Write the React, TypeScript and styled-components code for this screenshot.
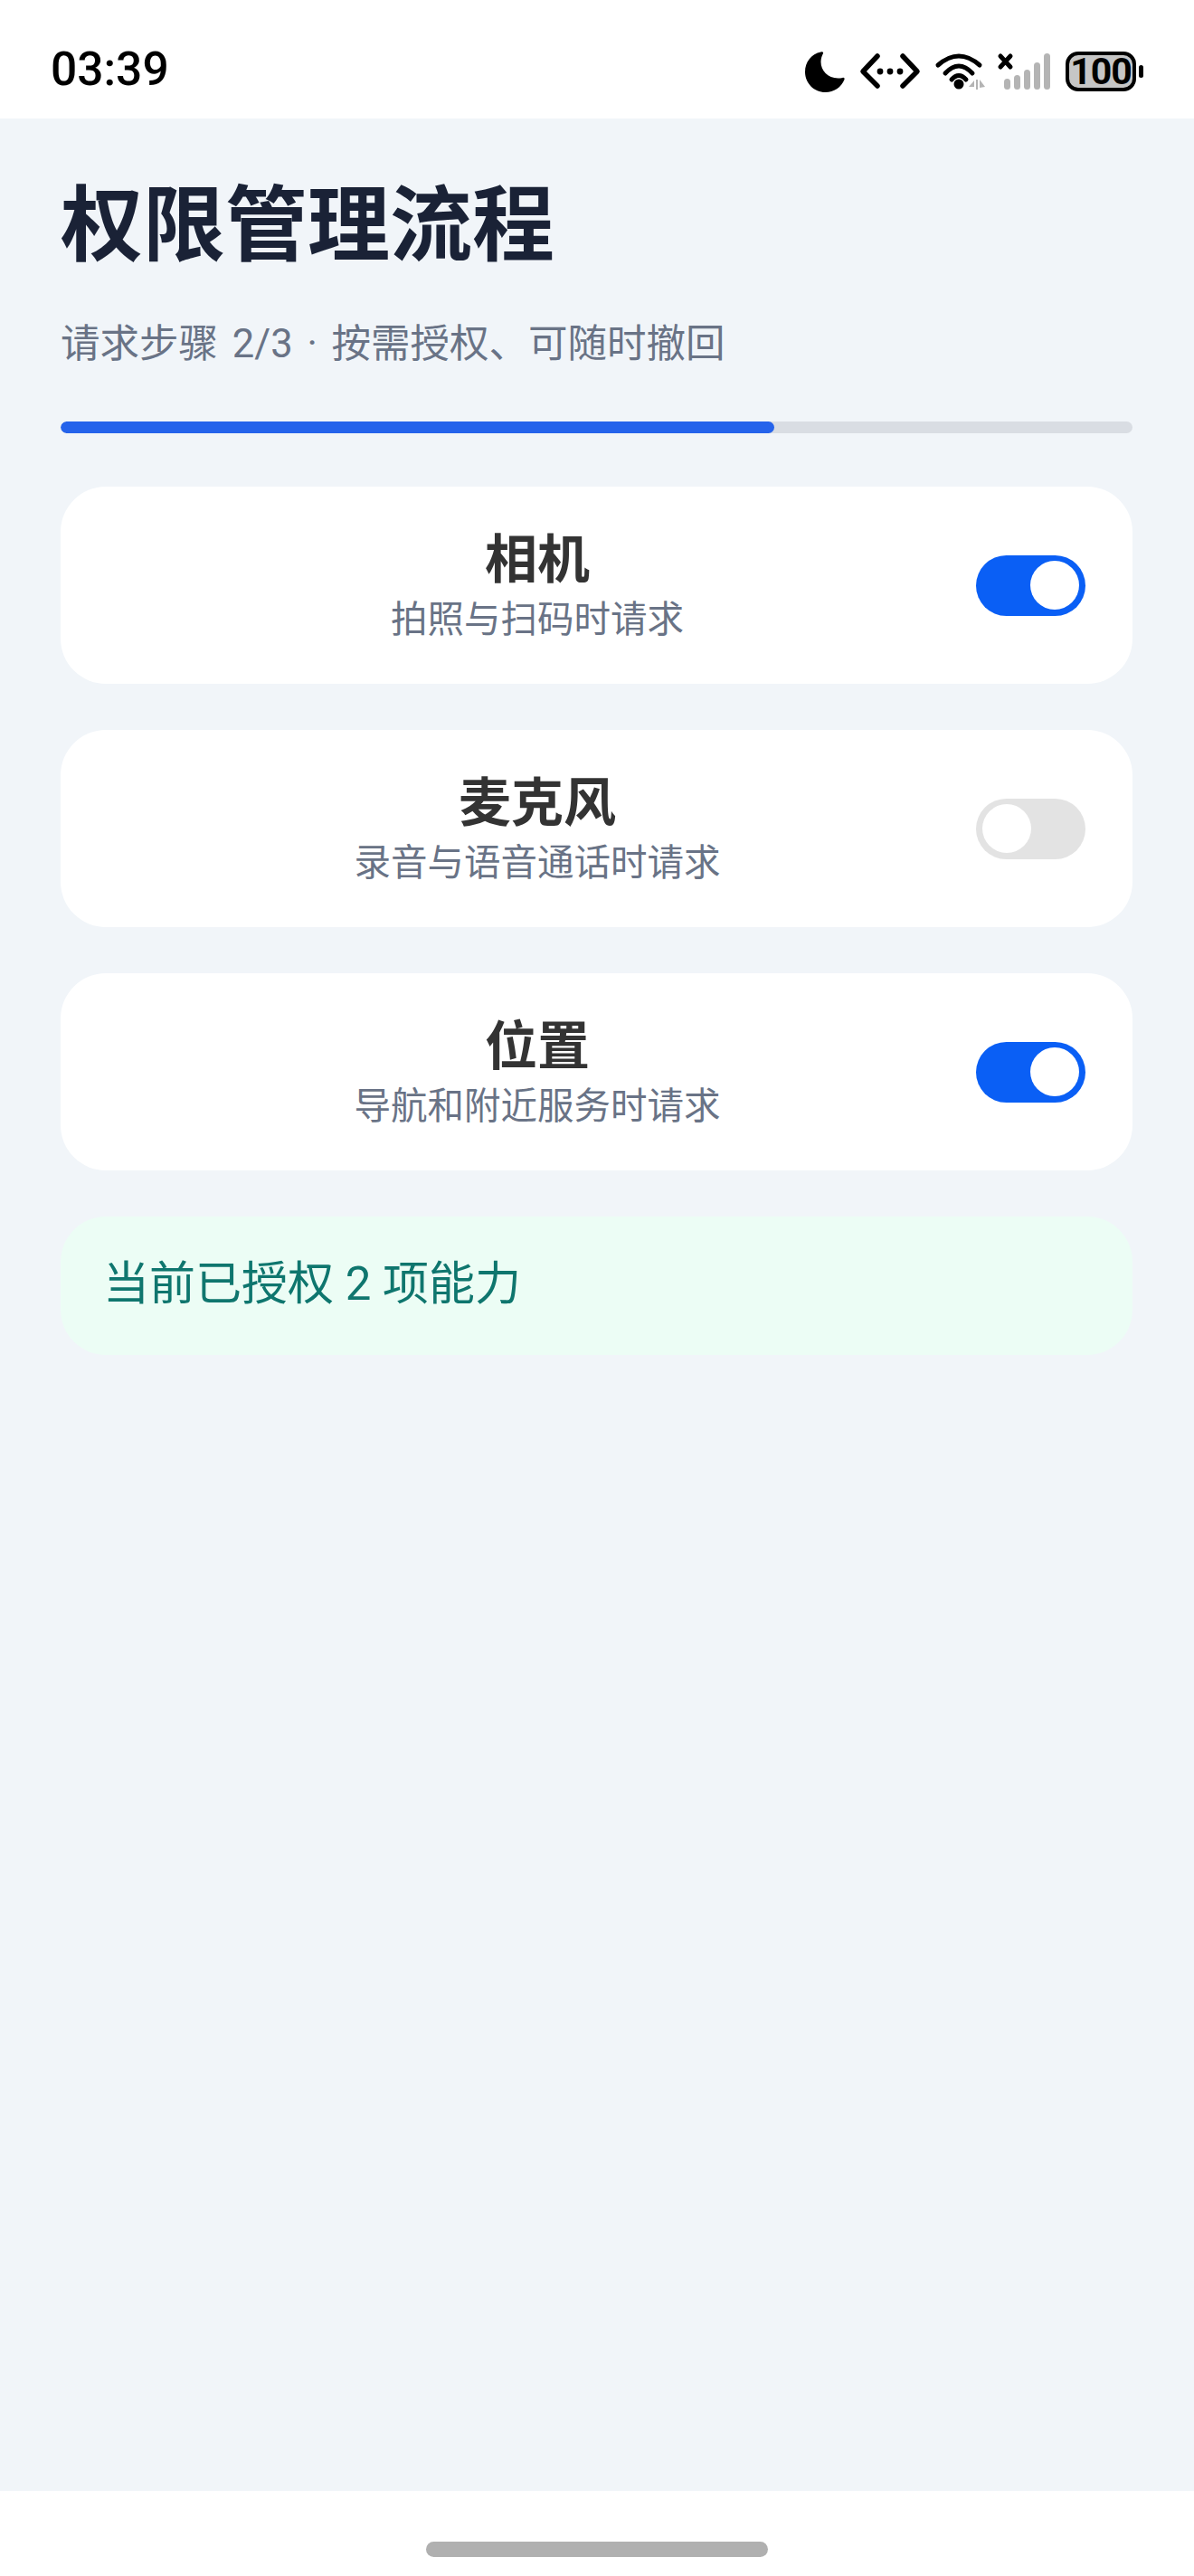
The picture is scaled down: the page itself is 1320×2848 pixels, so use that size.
import React from 'react';
import styled, { createGlobalStyle } from 'styled-components';

const permissions = [
  { name: '相机', hint: '拍照与扫码时请求', on: true },
  { name: '麦克风', hint: '录音与语音通话时请求', on: false },
  { name: '位置', hint: '导航和附近服务时请求', on: true },
];

const App: React.FC = () => {
  return (
    <Screen>
      <GlobalStyle />
      <StatusBar>
        <Clock>03:39</Clock>
        <StatusIcons>
          <svg width="44" height="46" viewBox="0 0 44 46">
            <path d="M17.5 1.5C7 3.5 0 12.5 0 23.500c0 12.500 10 22.500 22.500 22.500 9.500 0 17.500-5.500 21-14 .5-1.500-.5-2.500-2-2-1.500.5-3.500.5-5 .5-11.500 0-19-8.500-19-18 0-3.500 1-6.500 2.500-9.500.5-1-.5-2-2.500-1.500z" fill="#000" />
          </svg>
          <svg width="66" height="40" viewBox="0 0 66 40">
            <path d="M19 3L3 20l16 16M47 3l16 17-16 16" fill="none" stroke="#000" strokeWidth="5.500" strokeLinecap="round" strokeLinejoin="round" />
            <circle cx="22" cy="20" r="3.400" fill="#000" />
            <circle cx="33" cy="20" r="3.400" fill="#000" />
            <circle cx="44" cy="20" r="3.400" fill="#000" />
          </svg>
          <svg width="52" height="40" viewBox="0 0 52 40">
            <path d="M3 13Q26-7 49 13M11 22Q26 6 41 22M18 29Q26 20 34 29" fill="none" stroke="#000" strokeWidth="5" strokeLinecap="round" />
            <circle cx="26" cy="34" r="5.500" fill="#000" />
            <path d="M43 30l-6 7h6zM45 29h2v11h-2zM49 29v9l6-1z" fill="#b4b4b4" />
          </svg>
          <svg width="58" height="40" viewBox="0 0 58 40">
            <path d="M3 3l11 12M14 3L3 15" fill="none" stroke="#000" strokeWidth="5" strokeLinecap="round" />
            <rect x="7" y="28" width="7" height="12" rx="3.500" fill="#b4b4b4" />
            <rect x="18" y="24" width="7" height="16" rx="3.500" fill="#b4b4b4" />
            <rect x="29" y="18" width="7" height="22" rx="3.500" fill="#b4b4b4" />
            <rect x="40" y="10" width="7" height="30" rx="3.500" fill="#b4b4b4" />
            <rect x="51" y="0" width="7" height="40" rx="3.500" fill="#b4b4b4" />
          </svg>
          <Battery>
            <BatteryBody>100</BatteryBody>
            <BatteryCap />
          </Battery>
        </StatusIcons>
      </StatusBar>

      <Content>
        <Title>权限管理流程</Title>
        <Subtitle>请求步骤 2/3 · 按需授权、可随时撤回</Subtitle>
        <ProgressTrack>
          <ProgressFill />
        </ProgressTrack>

        {permissions.map((item) => (
          <Card key={item.name}>
            <CardText>
              <CardName>{item.name}</CardName>
              <CardHint>{item.hint}</CardHint>
            </CardText>
            <Toggle $on={item.on}>
              <Thumb />
            </Toggle>
          </Card>
        ))}

        <Notice>当前已授权 2 项能力</Notice>
      </Content>

      <NavBar>
        <NavPill />
      </NavBar>
    </Screen>
  );
};

const GlobalStyle = createGlobalStyle`
  html, body {
    margin: 0;
    padding: 0;
    background: #f1f5f9;
  }
  * {
    box-sizing: border-box;
  }
`;

const Screen = styled.div`
  width: 1320px;
  height: 2848px;
  display: flex;
  flex-direction: column;
  background: #f1f5f9;
  font-family: Roboto, 'Noto Sans CJK SC', sans-serif;
`;

const StatusBar = styled.div`
  height: 131px;
  flex-shrink: 0;
  background: #fff;
  display: flex;
  align-items: center;
  justify-content: space-between;
  padding: 27px 56px 0;
`;

const Clock = styled.div`
  font-family: Roboto, sans-serif;
  font-size: 51.500px;
  font-weight: 500;
  color: #000;
  margin-top: -6px;
`;

const StatusIcons = styled.div`
  display: flex;
  align-items: center;
  gap: 17px;
  svg {
    display: block;
    overflow: visible;
  }
`;

const Battery = styled.div`
  display: flex;
  align-items: center;
  gap: 3px;
`;

const BatteryBody = styled.div`
  width: 78px;
  height: 44px;
  border: 4.500px solid #000;
  border-radius: 14px;
  background: #c6c6c6;
  display: flex;
  align-items: center;
  justify-content: center;
  font-family: Roboto, sans-serif;
  font-size: 41px;
  font-weight: 700;
  letter-spacing: -1px;
  color: #000;
`;

const BatteryCap = styled.div`
  width: 5px;
  height: 14px;
  border-radius: 3px;
  background: #000;
`;

const Content = styled.div`
  flex: 1;
  padding: 0 68px 0 67px;
  display: flex;
  flex-direction: column;
`;

const Title = styled.h1`
  margin: 59px 0 0;
  font-size: 91px;
  line-height: 120px;
  font-weight: 700;
  color: #1a2236;
`;

const Subtitle = styled.div`
  margin-top: 40px;
  font-size: 43.500px;
  line-height: 62px;
  word-spacing: 5px;
  color: #697386;
`;

const ProgressTrack = styled.div`
  margin-top: 54px;
  height: 13px;
  border-radius: 7px;
  background: #d9dde3;
  overflow: hidden;
`;

const ProgressFill = styled.div`
  width: 66.600%;
  height: 100%;
  border-radius: 7px;
  background: #2563eb;
`;

const Card = styled.div`
  margin-top: 59px;
  & + & {
    margin-top: 51px;
  }
  height: 218px;
  border-radius: 50px;
  background: #fff;
  display: flex;
  align-items: center;
  gap: 10px;
  padding: 0 52px;
`;

const CardText = styled.div`
  flex: 1;
  text-align: center;
`;

const CardName = styled.div`
  font-size: 58px;
  line-height: 76px;
  font-weight: 700;
  color: #333;
`;

const CardHint = styled.div`
  font-size: 40.500px;
  line-height: 56px;
  color: #697386;
`;

const Toggle = styled.div<{ $on: boolean }>`
  width: 121px;
  height: 67px;
  border-radius: 34px;
  padding: 6px 7px;
  background: ${(props) => (props.$on ? '#0a5ff5' : '#e3e3e3')};
  display: flex;
  justify-content: ${(props) => (props.$on ? 'flex-end' : 'flex-start')};
`;

const Thumb = styled.div`
  width: 54px;
  height: 54px;
  border-radius: 50%;
  background: #fff;
`;

const Notice = styled.div`
  margin-top: 51px;
  height: 153px;
  border-radius: 50px;
  background: #ecfdf5;
  display: flex;
  align-items: center;
  padding: 0 47px 13px;
  font-size: 51px;
  color: #0f766e;
`;

const NavBar = styled.div`
  height: 94px;
  flex-shrink: 0;
  background: #fff;
  display: flex;
  justify-content: center;
  padding-top: 56px;
`;

const NavPill = styled.div`
  width: 378px;
  height: 17px;
  border-radius: 9px;
  background: #b0b0b0;
`;

export default App;
